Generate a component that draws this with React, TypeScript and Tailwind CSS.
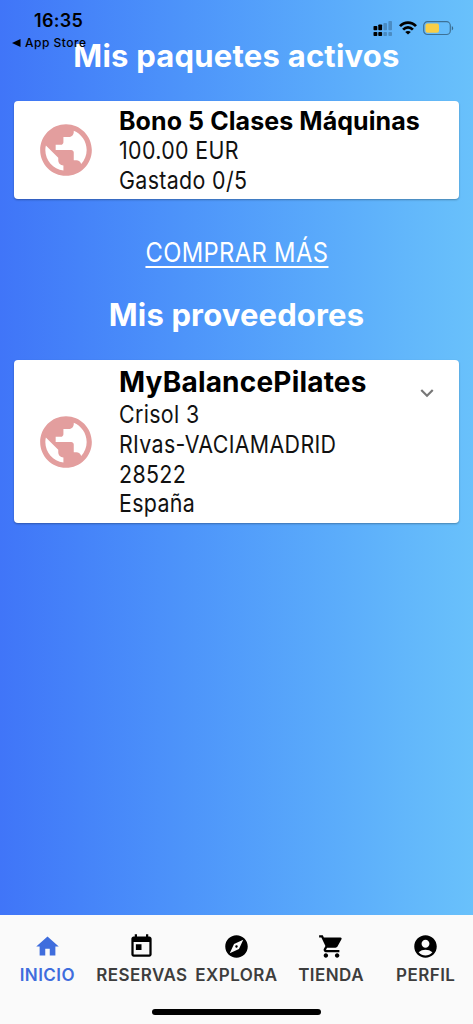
import type { ReactNode } from "react"
import { MdAccountCircle, MdExplore, MdHome, MdKeyboardArrowDown, MdPublic } from "react-icons/md"

type Tab = {
  label: string
  icon: (props: { className?: string }) => ReactNode
  active?: boolean
}

function CalendarIcon({ className }: { className?: string }) {
  return (
    <svg className={className} viewBox="0 0 24 24" fill="currentColor">
      <path d="M19 3h-1V1h-2v2H8V1H6v2H5c-1.11 0-1.99.9-1.99 2L3 19c0 1.1.89 2 2 2h14c1.1 0 2-.9 2-2V5c0-1.1-.9-2-2-2zm0 16H5V8h14v11zM7 10h5v5H7z" />
    </svg>
  )
}

function CartIcon({ className }: { className?: string }) {
  return (
    <svg className={className} viewBox="0 0 24 24" fill="currentColor">
      <path d="M7 18c-1.1 0-1.99.9-1.99 2S5.9 22 7 22s2-.9 2-2-.9-2-2-2zM1 2v2h2l3.6 7.59-1.35 2.45c-.16.28-.25.61-.25.96 0 1.1.9 2 2 2h12v-2H7.42c-.14 0-.25-.11-.25-.25l.03-.12.9-1.63h7.45c.75 0 1.41-.41 1.75-1.03l3.58-6.49A1 1 0 0 0 20 4H5.21l-.94-2H1zm16 16c-1.1 0-1.99.9-1.99 2s.89 2 1.99 2 2-.9 2-2-.9-2-2-2z" />
    </svg>
  )
}

const tabs: Tab[] = [
  { label: "INICIO", icon: MdHome, active: true },
  { label: "RESERVAS", icon: CalendarIcon },
  { label: "EXPLORA", icon: MdExplore },
  { label: "TIENDA", icon: CartIcon },
  { label: "PERFIL", icon: MdAccountCircle },
]

function StatusBar() {
  return (
    <div className="absolute inset-x-0 top-0 flex h-[52px] justify-between text-black">
      <div className="pl-3 pt-[10px]">
        <p className="pl-[22px] text-[18px] font-semibold leading-[22px] tracking-[0.3px]">16:35</p>
        <p className="mt-[3px] flex items-center gap-1 whitespace-nowrap text-[12px] font-medium leading-[16px] tracking-[0.5px]">
          <svg width="9" height="8" viewBox="0 0 9 8">
            <path d="M0 4 8.5 0v8z" />
          </svg>
          App Store
        </p>
      </div>
      <div className="flex gap-[6px] pr-[19px] pt-5">
        {/* Cobertura de las dos líneas */}
        <svg width="20" height="17" viewBox="0 0 20 17">
          <rect x="0.5" y="6" width="3.8" height="4.2" rx="0.8" />
          <rect x="5.3" y="4.5" width="3.8" height="5.7" rx="0.8" />
          <rect x="0.5" y="12" width="3.8" height="4" rx="0.8" />
          <rect x="5.3" y="12" width="3.8" height="4" rx="0.8" />
          <g opacity="0.22">
            <rect x="10.4" y="3" width="3.6" height="7.2" rx="0.8" />
            <rect x="15.4" y="1" width="3.6" height="9.2" rx="0.8" />
            <rect x="10.4" y="12" width="3.6" height="4" rx="0.8" />
            <rect x="15.4" y="12" width="3.6" height="4" rx="0.8" />
          </g>
        </svg>
        <svg width="18" height="15" viewBox="0 0 18 15" fill="none" stroke="currentColor" strokeWidth="2.7">
          <path d="M1 6.2C5.5 1.3 12.5 1.3 17 6.2" />
          <path d="M4.1 9.6c2.9-3 6.9-3 9.8 0" />
          <path d="M9 14.6 6.2 12c1.6-1.5 4-1.5 5.6 0z" fill="currentColor" stroke="none" />
        </svg>
        <svg width="31" height="16" viewBox="0 0 31 16">
          <rect x="0.7" y="1.7" width="26.6" height="12.8" rx="3.8" fill="none" stroke="#000" strokeOpacity="0.4" strokeWidth="1.2" />
          <rect x="2.5" y="3.5" width="13.5" height="9.3" rx="2" fill="#f9ce46" />
          <path d="M28.8 6v4.4c1.9-.8 1.9-3.6 0-4.4z" fillOpacity="0.45" />
        </svg>
      </div>
    </div>
  )
}

function Card({ title, children, className }: { title: ReactNode; children: ReactNode; className?: string }) {
  return (
    <section className={`ml-[13.5px] mr-[14px] flex rounded-[4px] bg-white shadow-[0_1px_2px_rgba(0,0,0,0.3)] ${className}`}>
      <div className="flex w-[105.5px] shrink-0 items-center justify-center">
        <MdPublic className="size-[62px] text-[#e39e9e]" />
      </div>
      <div className="grow">
        {title}
        <div className="origin-left scale-x-88 text-[24.3px] leading-[29.8px] tracking-[0.4px] text-[#111]">{children}</div>
      </div>
    </section>
  )
}

export default function App() {
  return (
    <div className="relative flex h-[1024px] w-full flex-col overflow-hidden bg-linear-to-r from-[#4075f8] to-[#69c1fb] font-[Inter,sans-serif]">
      <main className="flex grow flex-col">
        <h1 className="mt-9 text-center text-[31px] font-bold leading-10 tracking-[0.23px] text-white">Mis paquetes activos</h1>

        <Card
          className="mt-[24.5px] h-[98px]"
          title={<h2 className="pt-[5px] text-[25px] font-bold leading-[30.5px] tracking-[0.08px] text-black">Bono 5 Clases Máquinas</h2>}
        >
          <p>100.00 EUR</p>
          <p>Gastado 0/5</p>
        </Card>

        <a href="#" className="mx-auto mt-[41.5px] scale-x-88 border-b-2 border-white text-[27px] leading-[25.5px] tracking-[0.4px] text-white">
          COMPRAR MÁS
        </a>

        <h1 className="mt-[27px] text-center text-[31px] font-bold leading-10 tracking-[0.15px] text-white">Mis proveedores</h1>

        <Card
          className="mt-[25.5px] h-[163px]"
          title={
            <div className="flex h-10 items-start justify-between pt-[5px]">
              <h2 className="text-[28px] font-bold leading-[35px] tracking-[0.2px] text-black">MyBalancePilates</h2>
              <MdKeyboardArrowDown className="mr-[19px] mt-[15px] size-[26px] text-[#777]" />
            </div>
          }
        >
          <p>Crisol 3</p>
          <p>RIvas-VACIAMADRID</p>
          <p>28522</p>
          <p>España</p>
        </Card>
      </main>

      <StatusBar />

      <nav className="flex h-[109px] flex-col items-center bg-[#fafafa]">
        <div className="grid w-full grid-cols-5 pt-[17.5px]">
          {tabs.map(({ label, icon: Icon, active }) => (
            <a
              key={label}
              href="#"
              className={`flex flex-col items-center text-[17px] font-semibold leading-5 tracking-[0.45px] ${active ? "text-[#3f6ddd]" : "text-[#3d3d3d]"}`}
            >
              <Icon className={`mb-[5px] size-[27px] ${active ? "" : "text-black"}`} />
              {label}
            </a>
          ))}
        </div>
        {/* Indicador de inicio */}
        <div className="mt-auto mb-[9px] h-[6px] w-[169px] rounded-full bg-black" />
      </nav>
    </div>
  )
}
